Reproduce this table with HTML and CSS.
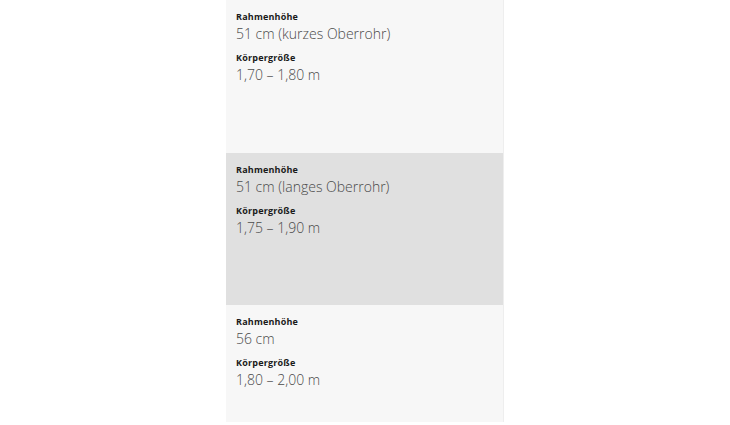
FILE: index.html
```html
<!DOCTYPE html>
<html lang="de">
<head>
  <meta charset="UTF-8" />
  <title>Rahmengrößen</title>
  <link rel="stylesheet" href="styles.css">
</head>
<body>

  <div class="sizes">
    <div class="size-card">
      <div class="label">Rahmenhöhe</div>
      <div class="value">51 cm (kurzes Oberrohr)</div>
      <div class="label">Körpergröße</div>
      <div class="value">1,70 – 1,80 m</div>
    </div>

    <div class="size-card active">
      <div class="label">Rahmenhöhe</div>
      <div class="value">51 cm (langes Oberrohr)</div>
      <div class="label">Körpergröße</div>
      <div class="value">1,75 – 1,90 m</div>
    </div>

    <div class="size-card last">
      <div class="label">Rahmenhöhe</div>
      <div class="value">56 cm</div>
      <div class="label">Körpergröße</div>
      <div class="value">1,80 – 2,00 m</div>
    </div>
  </div>

</body>
</html>
```

FILE: styles.css
```css
body {
  margin: 0;
  background: #ffffff;
  font-family: "Open Sans", "Noto Sans", sans-serif;
}

.sizes {
  width: 277px;
  margin: 0 auto;
  border-right: 1px solid #eeeeee;
}

.size-card {
  background: #f7f7f7;
  height: 153px;
  box-sizing: border-box;
  padding: 11px 10px 0;
}

.size-card.active {
  background: #e0e0e0;
  height: 152px;
}

.size-card.last {
  height: 117px;
}

.label {
  font-size: 9px;
  font-weight: 700;
  color: #1a1a1a;
  line-height: 12px;
  letter-spacing: 0.2px;
}

.value {
  font-size: 14px;
  font-weight: 300;
  color: #4a4a4a;
  line-height: 18px;
  margin: 2px 0 9px;
}
```
